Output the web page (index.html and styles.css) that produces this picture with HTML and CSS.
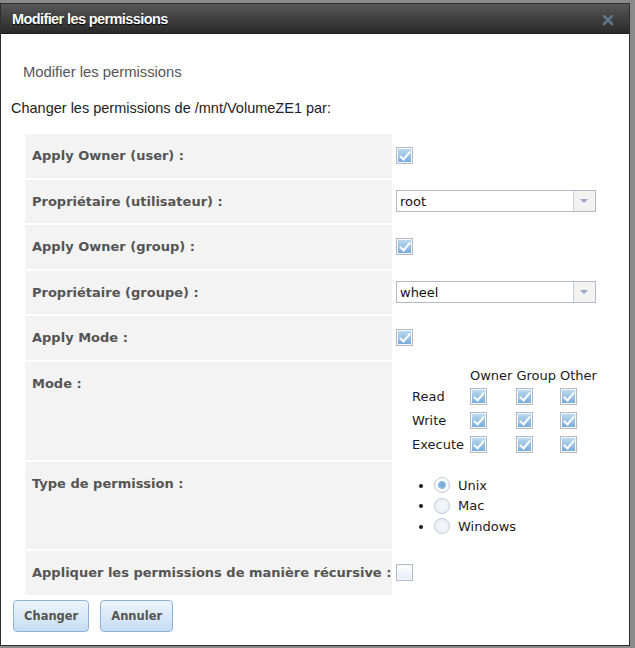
FILE: index.html
```html
<!DOCTYPE html>
<html lang="fr">

<head>
    <meta charset="UTF-8">
    <title>Modifier les permissions</title>
    <link rel="stylesheet" href="styles.css">
</head>

<body>
    <div class="dialog">
        <!-- barre de titre -->
        <div class="titlebar">
            <span class="title">Modifier les permissions</span>
            <svg class="close" viewBox="0 0 12 12" width="12" height="12">
                <path d="M2 2l8 8M10 2l-8 8" stroke="#465363" stroke-width="3.4" stroke-linecap="round"></path>
                <path d="M2 2l8 8M10 2l-8 8" stroke="#66798f" stroke-width="1.8" stroke-linecap="round"></path>
            </svg>
        </div>

        <div class="subhead">Modifier les permissions</div>
        <div class="intro">Changer les permissions de /mnt/VolumeZE1 par:</div>

        <table class="form">
            <tr>
                <td class="label">Apply Owner (user) :</td>
                <td class="field"><span class="cb checked"></span></td>
            </tr>
            <tr>
                <td class="label">Propriétaire (utilisateur) :</td>
                <td class="field">
                    <div class="select"><span class="select-text">root</span><span class="select-btn"></span></div>
                </td>
            </tr>
            <tr>
                <td class="label">Apply Owner (group) :</td>
                <td class="field"><span class="cb checked"></span></td>
            </tr>
            <tr>
                <td class="label">Propriétaire (groupe) :</td>
                <td class="field">
                    <div class="select"><span class="select-text">wheel</span><span class="select-btn"></span></div>
                </td>
            </tr>
            <tr>
                <td class="label">Apply Mode :</td>
                <td class="field"><span class="cb checked"></span></td>
            </tr>
            <tr>
                <td class="label">Mode :</td>
                <td class="field">
                    <table class="mode">
                        <tr>
                            <td class="mode-name"></td>
                            <td>Owner</td>
                            <td>Group</td>
                            <td>Other</td>
                        </tr>
                        <tr>
                            <td class="mode-name">Read</td>
                            <td><span class="cb checked"></span></td>
                            <td><span class="cb checked"></span></td>
                            <td><span class="cb checked"></span></td>
                        </tr>
                        <tr>
                            <td class="mode-name">Write</td>
                            <td><span class="cb checked"></span></td>
                            <td><span class="cb checked"></span></td>
                            <td><span class="cb checked"></span></td>
                        </tr>
                        <tr>
                            <td class="mode-name">Execute</td>
                            <td><span class="cb checked"></span></td>
                            <td><span class="cb checked"></span></td>
                            <td><span class="cb checked"></span></td>
                        </tr>
                    </table>
                </td>
            </tr>
            <tr>
                <td class="label">Type de permission :</td>
                <td class="field">
                    <ul class="radios">
                        <li><span class="radio checked"></span>Unix</li>
                        <li><span class="radio"></span>Mac</li>
                        <li><span class="radio"></span>Windows</li>
                    </ul>
                </td>
            </tr>
            <tr>
                <td class="label">Appliquer les permissions de manière récursive :</td>
                <td class="field"><span class="cb"></span></td>
            </tr>
        </table>

        <div class="actions">
            <button class="btn">Changer</button>
            <button class="btn">Annuler</button>
        </div>
    </div>
</body>

</html>
```

FILE: styles.css
```css
/* fond assombri derrière la fenêtre */
body {
    margin: 0;
    background: #8a8a8a;
    font-family: "DejaVu Sans", Verdana, sans-serif;
    font-size: 13px;
    color: #1a1a1a;
    overflow: hidden;
}

/* fenêtre */
.dialog {
    box-sizing: border-box;
    width: 630px;
    height: 643px;
    margin-top: 3px;
    background: #fff;
    border: 1px solid #2e2e2e;
    overflow: hidden;
}

/* barre de titre */
.titlebar {
    height: 30px;
    display: flex;
    justify-content: space-between;
    align-items: center;
    padding: 1px 15px 0 11px;
    background: linear-gradient(#575757, #2a2a2a);
    border-bottom: 1px solid #1f1f1f;
    box-sizing: border-box;
}

.title {
    font-family: "Liberation Sans", Arial, sans-serif;
    font-weight: bold;
    font-size: 14.5px;
    letter-spacing: -0.6px;
    color: #fff;
    text-shadow: 0 1px 1px #000;
}

.close {
    display: block;
    margin-top: 1px;
}

/* titres */
.subhead {
    margin-top: 29px;
    padding-left: 22px;
    font-family: "Liberation Sans", Arial, sans-serif;
    font-size: 14.8px;
    line-height: 18px;
    color: #555;
}

.intro {
    margin-top: 19px;
    padding-left: 10px;
    font-family: "Liberation Sans", Arial, sans-serif;
    font-size: 14.5px;
    line-height: 17px;
    color: #222;
}

/* formulaire */
.form {
    width: 600px;
    margin: 15px 0 0 22px;
    table-layout: fixed;
    border-collapse: separate;
    border-spacing: 2px;
}

.label {
    width: 353px;
    padding: 14px 7px;
    line-height: 15.5px;
    background: #f3f3f3;
    font-weight: bold;
    color: #555;
    white-space: nowrap;
    vertical-align: top;
}

.field {
    padding: 1px 2px;
    vertical-align: middle;
}

/* cases à cocher */
.cb {
    display: block;
    position: relative;
    box-sizing: border-box;
    width: 17px;
    height: 17px;
    border: 1px solid #b4bac3;
    box-shadow: inset 0 0 0 1px #f4f8fc;
    background: linear-gradient(#fff, #e2ecf6);
}

.cb.checked {
    background: linear-gradient(#c0dbf2, #74a9da);
}

.cb.checked::after {
    content: '';
    position: absolute;
    left: 5px;
    top: 1px;
    width: 4px;
    height: 9px;
    border-right: 2.5px solid #fff;
    border-bottom: 2.5px solid #fff;
    transform: rotate(40deg);
}

/* liste déroulante */
.select {
    box-sizing: border-box;
    width: 200px;
    height: 22px;
    display: flex;
    border: 1px solid #b5b8c8;
    background: #fff;
}

.select-text {
    flex: 1;
    padding-left: 3px;
    line-height: 21px;
    color: #111;
}

.select-btn {
    width: 21px;
    position: relative;
    border-left: 1px solid #cfcfd6;
    background: #f2f2f2;
}

.select-btn::after {
    content: '';
    position: absolute;
    left: 6px;
    top: 8px;
    border-left: 4px solid transparent;
    border-right: 4px solid transparent;
    border-top: 4px solid #95a7cc;
}

/* grille des droits */
.mode {
    margin: 2px 0 1px 13px;
    border-collapse: separate;
    border-spacing: 2px;
    line-height: 15px;
}

.mode td {
    padding: 1px;
    vertical-align: middle;
}

.mode .mode-name {
    width: 54px;
}

.mode .cb {
    margin: 1.5px 0;
}

/* type de permission */
.radios {
    margin: 13px 0 11px;
    padding-left: 38px;
    list-style: disc;
}

.radios li {
    line-height: 20.5px;
}

.radio {
    display: inline-block;
    vertical-align: middle;
    box-sizing: border-box;
    width: 16px;
    height: 16px;
    margin: -2px 8px 0 0;
    border: 1px solid #c3ccd7;
    border-radius: 50%;
    background: radial-gradient(circle, #f6f9fc 0, #e3ecf5 100%);
}

.radio.checked {
    background: radial-gradient(circle, #6ea5d6 0, #8dbbe2 3.5px, #fff 4.5px, #e7eef6 100%);
}

/* boutons */
.actions {
    display: flex;
    gap: 11px;
    margin-top: 3.5px;
    padding-left: 12px;
}

.btn {
    height: 32px;
    padding: 0 10px;
    border: 1px solid #8fb2d8;
    border-radius: 4px;
    background: linear-gradient(#edf5fd, #c6ddf4);
    font-family: "DejaVu Sans", Verdana, sans-serif;
    font-weight: bold;
    font-size: 11.5px;
    color: #555;
}
```
